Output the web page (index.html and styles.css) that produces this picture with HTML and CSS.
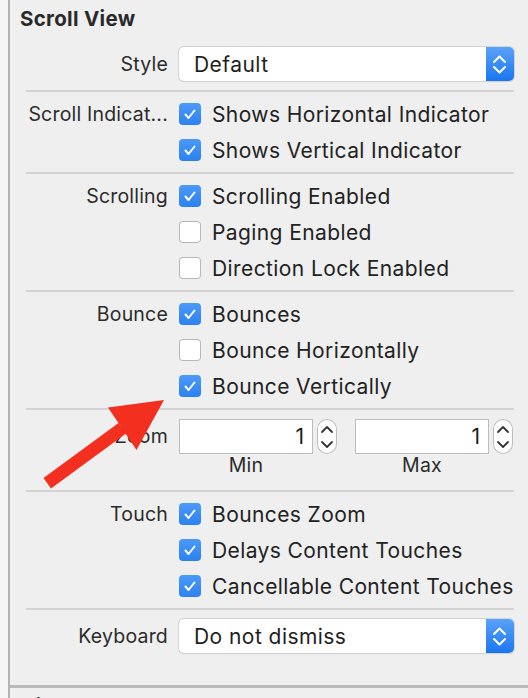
FILE: index.html
```html
<!DOCTYPE html>
<html>
<head>
<meta charset="utf-8">
<link rel="stylesheet" href="styles.css">
</head>
<body>
<div class="page">
  <div class="gutter"></div>
  <div class="panel">
    <h2 class="title">Scroll View</h2>
    <div class="sections">
      <div class="row popup-row">
        <div class="label">Style</div>
        <div class="popup">
          <span class="popup-text">Default</span>
          <span class="popup-btn"><svg width="28" height="34" viewBox="0 0 28 34"><polyline points="8,15 13.5,9.5 19,15" fill="none" stroke="#fff" stroke-width="2" stroke-linecap="round" stroke-linejoin="round"/><polyline points="8,20 13.5,25.5 19,20" fill="none" stroke="#fff" stroke-width="2" stroke-linecap="round" stroke-linejoin="round"/></svg></span>
        </div>
      </div>

      <div class="group">
        <div class="row"><div class="label">Scroll Indicat...</div><div class="check"><span class="box on"><svg width="22" height="22" viewBox="0 0 22 22"><polyline points="6.5,11.5 9.5,15 15.5,7.5" fill="none" stroke="#fff" stroke-width="2" stroke-linecap="round" stroke-linejoin="round"/></svg></span>Shows Horizontal Indicator</div></div>
        <div class="row"><div class="label"></div><div class="check"><span class="box on"><svg width="22" height="22" viewBox="0 0 22 22"><polyline points="6.5,11.5 9.5,15 15.5,7.5" fill="none" stroke="#fff" stroke-width="2" stroke-linecap="round" stroke-linejoin="round"/></svg></span>Shows Vertical Indicator</div></div>
      </div>

      <div class="group">
        <div class="row"><div class="label">Scrolling</div><div class="check"><span class="box on"><svg width="22" height="22" viewBox="0 0 22 22"><polyline points="6.5,11.5 9.5,15 15.5,7.5" fill="none" stroke="#fff" stroke-width="2" stroke-linecap="round" stroke-linejoin="round"/></svg></span>Scrolling Enabled</div></div>
        <div class="row"><div class="label"></div><div class="check"><span class="box"></span>Paging Enabled</div></div>
        <div class="row"><div class="label"></div><div class="check"><span class="box"></span>Direction Lock Enabled</div></div>
      </div>

      <div class="group">
        <div class="row"><div class="label">Bounce</div><div class="check"><span class="box on"><svg width="22" height="22" viewBox="0 0 22 22"><polyline points="6.5,11.5 9.5,15 15.5,7.5" fill="none" stroke="#fff" stroke-width="2" stroke-linecap="round" stroke-linejoin="round"/></svg></span>Bounces</div></div>
        <div class="row"><div class="label"></div><div class="check"><span class="box"></span>Bounce Horizontally</div></div>
        <div class="row"><div class="label"></div><div class="check"><span class="box on"><svg width="22" height="22" viewBox="0 0 22 22"><polyline points="6.5,11.5 9.5,15 15.5,7.5" fill="none" stroke="#fff" stroke-width="2" stroke-linecap="round" stroke-linejoin="round"/></svg></span>Bounce Vertically</div></div>
      </div>

      <div class="group zoom-group">
        <div class="zoom-row">
          <div class="label zoom-label">Zoom</div>
          <div class="steppers">
            <div class="stepper-col">
              <div class="stepper-line">
                <div class="numfield">1</div>
                <div class="stepper"><svg width="20" height="35" viewBox="0 0 20 35"><polyline points="5,13 10,8 15,13" fill="none" stroke="#333" stroke-width="1.8" stroke-linecap="round" stroke-linejoin="round"/><polyline points="5,23 10,28 15,23" fill="none" stroke="#333" stroke-width="1.8" stroke-linecap="round" stroke-linejoin="round"/></svg></div>
              </div>
              <div class="caption">Min</div>
            </div>
            <div class="stepper-col">
              <div class="stepper-line">
                <div class="numfield">1</div>
                <div class="stepper"><svg width="20" height="35" viewBox="0 0 20 35"><polyline points="5,13 10,8 15,13" fill="none" stroke="#333" stroke-width="1.8" stroke-linecap="round" stroke-linejoin="round"/><polyline points="5,23 10,28 15,23" fill="none" stroke="#333" stroke-width="1.8" stroke-linecap="round" stroke-linejoin="round"/></svg></div>
              </div>
              <div class="caption">Max</div>
            </div>
          </div>
        </div>
      </div>

      <div class="group">
        <div class="row"><div class="label">Touch</div><div class="check"><span class="box on"><svg width="22" height="22" viewBox="0 0 22 22"><polyline points="6.5,11.5 9.5,15 15.5,7.5" fill="none" stroke="#fff" stroke-width="2" stroke-linecap="round" stroke-linejoin="round"/></svg></span>Bounces Zoom</div></div>
        <div class="row"><div class="label"></div><div class="check"><span class="box on"><svg width="22" height="22" viewBox="0 0 22 22"><polyline points="6.5,11.5 9.5,15 15.5,7.5" fill="none" stroke="#fff" stroke-width="2" stroke-linecap="round" stroke-linejoin="round"/></svg></span>Delays Content Touches</div></div>
        <div class="row"><div class="label"></div><div class="check"><span class="box on"><svg width="22" height="22" viewBox="0 0 22 22"><polyline points="6.5,11.5 9.5,15 15.5,7.5" fill="none" stroke="#fff" stroke-width="2" stroke-linecap="round" stroke-linejoin="round"/></svg></span>Cancellable Content Touches</div></div>
      </div>

      <div class="group kb-group">
        <div class="row popup-row">
          <div class="label">Keyboard</div>
          <div class="popup">
            <span class="popup-text">Do not dismiss</span>
            <span class="popup-btn"><svg width="28" height="34" viewBox="0 0 28 34"><polyline points="8,15 13.5,9.5 19,15" fill="none" stroke="#fff" stroke-width="2" stroke-linecap="round" stroke-linejoin="round"/><polyline points="8,20 13.5,25.5 19,20" fill="none" stroke="#fff" stroke-width="2" stroke-linecap="round" stroke-linejoin="round"/></svg></span>
          </div>
        </div>
      </div>
    </div>
    <div class="next-section">
      <h2 class="title">View</h2>
    </div>
  </div>
  <svg class="arrow" width="528" height="698" viewBox="0 0 528 698">
    <polygon points="43.5,478 51,488.5 126,433.5 118.5,423" fill="#f3301f"/>
    <polygon points="164,400 108,407.5 136.5,450" fill="#f3301f"/>
  </svg>
</div>
</body>
</html>
```

FILE: styles.css
```css
* { box-sizing: border-box; }
html, body {
  margin: 0;
  padding: 0;
  width: 528px;
  height: 698px;
  overflow: hidden;
  background: #f5f5f5;
}
.page {
  position: relative;
  display: flex;
  width: 528px;
  height: 698px;
  font-family: Inter, "Liberation Sans", sans-serif;
  color: #262626;
}
.gutter {
  width: 8px;
  flex: none;
  background: #f6f6f6;
}
.panel {
  flex: 1;
  border-left: 2px solid #b3b3b3;
  background: #efefef;
  display: flex;
  flex-direction: column;
}
.title {
  margin: 6px 0 0 10px;
  font-size: 20.5px;
  line-height: 26px;
  font-weight: 700;
  letter-spacing: 0.3px;
  color: #2a2a2a;
}
.sections {
  margin: 0 16px 0 16px;
}
.row {
  display: grid;
  grid-template-columns: 142px 1fr;
  column-gap: 11px;
  align-items: center;
  height: 36px;
}
.label {
  text-align: right;
  font-size: 19.5px;
  letter-spacing: 0.2px;
  white-space: nowrap;
  color: #2b2b2b;
}
.popup-row {
  height: 34px;
  margin-top: 15px;
  margin-bottom: 9px;
}
.popup {
  display: flex;
  height: 34px;
  background: #fff;
  border-radius: 5px;
  box-shadow: 0 0 0 1px #d2d2d2, 0 1px 1px rgba(0,0,0,0.15);
  align-items: center;
  overflow: hidden;
}
.popup-text {
  flex: 1;
  padding-left: 15px;
  font-size: 21px;
  letter-spacing: 0.45px;
  color: #1e1e1e;
}
.popup-btn {
  width: 28px;
  height: 34px;
  flex: none;
  display: flex;
  background: linear-gradient(#5aa2fa, #1b76ef);
}
.group {
  border-top: 2px solid #d3d3d3;
  padding: 4px 0;
}
.check {
  display: flex;
  align-items: center;
  gap: 11px;
  font-size: 21px;
  letter-spacing: 0.4px;
  white-space: nowrap;
  color: #222;
}
.box {
  width: 22px;
  height: 22px;
  flex: none;
  border-radius: 4px;
  background: #fff;
  box-shadow: inset 0 0 0 1px #b8b8b8;
  display: flex;
}
.box.on {
  background: linear-gradient(#4b9af8, #2c81f1);
  box-shadow: none;
}
.zoom-group {
  padding: 9px 0 14px;
}
.zoom-row {
  display: grid;
  grid-template-columns: 142px 1fr;
  column-gap: 11px;
}
.zoom-label {
  line-height: 35px;
}
.steppers {
  display: flex;
  gap: 18px;
}
.stepper-col {
  display: flex;
  flex-direction: column;
}
.stepper-line {
  display: flex;
  gap: 4px;
}
.numfield {
  width: 134px;
  height: 35px;
  background: #fff;
  border: 1px solid #bdbdbd;
  text-align: right;
  padding-right: 8px;
  font-size: 21px;
  line-height: 33px;
  color: #1e1e1e;
}
.stepper {
  width: 20px;
  height: 35px;
  border-radius: 10px;
  background: #fff;
  box-shadow: inset 0 0 0 1px #bdbdbd;
  display: flex;
}
.caption {
  width: 134px;
  text-align: center;
  font-size: 19.5px;
  letter-spacing: 0.2px;
  line-height: 22px;
  color: #2b2b2b;
}
.kb-group {
  padding: 0 0 32px;
}
.kb-group .popup-row {
  margin-top: 9px;
  margin-bottom: 0;
}
.next-section {
  border-top: 3px solid #bababa;
}
.next-section .title {
  margin-top: 6px;
}
.arrow {
  position: absolute;
  left: 0;
  top: 0;
  pointer-events: none;
}
```
